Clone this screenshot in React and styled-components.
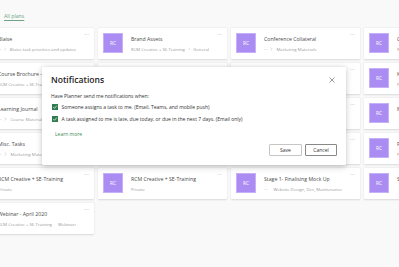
import styled, { createGlobalStyle } from 'styled-components';

const GlobalStyle = createGlobalStyle`
  html, body {
    margin: 0;
    padding: 0;
    background: #f9f9f9;
    font-family: "Open Sans", "Noto Sans", sans-serif;
    overflow: hidden;
  }
`;

const Page = styled.div`
  position: relative;
  width: 399px;
  height: 267px;
  overflow: hidden;
  background: #f9f9f9;
`;

const Header = styled.div`
  height: 27px;
  padding-left: 4px;
  display: flex;
  align-items: flex-start;
  padding-top: 12px;
  box-sizing: border-box;
`;

const AllPlans = styled.a`
  font-size: 5.2px;
  color: #6fa381;
  text-decoration: underline;
  text-underline-offset: 1.5px;
`;

const Grid = styled.div`
  display: grid;
  grid-template-columns: repeat(4, 129px);
  grid-auto-rows: 31px;
  column-gap: 4px;
  row-gap: 4px;
  margin-left: -35px;
  margin-top: 1px;
`;

const Card = styled.div`
  background: #fff;
  box-shadow: 0 0.5px 2px rgba(0, 0, 0, 0.13);
  border-radius: 1px;
  display: flex;
  align-items: flex-start;
  padding: 5px 5px 0 5px;
  gap: 8px;
  box-sizing: border-box;
`;

const Avatar = styled.div`
  width: 20px;
  height: 20px;
  flex: none;
  background: #ab8cf3;
  border: 0.5px solid #c6b1f8;
  box-sizing: border-box;
  color: #fff;
  font-size: 4.8px;
  display: flex;
  align-items: center;
  justify-content: center;
`;

const Info = styled.div`
  flex: 1;
  min-width: 0;
  display: flex;
  flex-direction: column;
  gap: 2.5px;
  padding-top: 2px;
`;

const Title = styled.div`
  font-size: 5.2px;
  color: #4a4a4a;
  white-space: nowrap;
  overflow: hidden;
`;

const Sub = styled.div`
  font-size: 4.3px;
  color: #9a9a9a;
  white-space: nowrap;
  overflow: hidden;
  display: flex;
  align-items: center;
  gap: 3px;
`;

const More = styled.div`
  font-size: 5px;
  letter-spacing: 0.3px;
  color: #8a8a8a;
  line-height: 3px;
  flex: none;
`;

const Dialog = styled.div`
  position: absolute;
  left: 42px;
  top: 67px;
  width: 304px;
  background: #fff;
  border-radius: 1px;
  box-shadow: 0 1.5px 6px rgba(0, 0, 0, 0.22), 0 0 1px rgba(0, 0, 0, 0.12);
  padding: 7px 9px 9px 9px;
  box-sizing: border-box;
  display: flex;
  flex-direction: column;
`;

const DialogHead = styled.div`
  display: flex;
  justify-content: space-between;
  align-items: center;
`;

const DialogTitle = styled.div`
  font-size: 8.6px;
  font-weight: 600;
  color: #252423;
`;

const Close = styled.svg`
  width: 6px;
  height: 6px;
  margin-right: 2px;
`;

const Lead = styled.div`
  font-size: 5px;
  color: #333;
  margin-top: 7px;
`;

const Option = styled.label`
  display: flex;
  align-items: center;
  gap: 3.5px;
  font-size: 5px;
  color: #333;
  margin-top: ${(p) => p.$gap}px;
  padding-left: 1px;
`;

const Box = styled.svg`
  width: 6px;
  height: 6px;
  flex: none;
`;

const LearnMore = styled.a`
  font-size: 5px;
  color: #3f8a5c;
  margin-top: 9px;
  padding-left: 4px;
`;

const Actions = styled.div`
  display: flex;
  justify-content: flex-end;
  gap: 3px;
  margin-top: 7px;
`;

const Button = styled.button`
  height: 12px;
  width: ${(p) => p.$w}px;
  padding: 0;
  font-family: inherit;
  font-size: 5px;
  color: #333;
  background: #fff;
  border: 0.7px solid ${(p) => (p.$strong ? '#8a8886' : '#c8c6c4')};
  border-radius: 1px;
`;

const Chevron = () => (
  <svg width="3" height="4" viewBox="0 0 3 4">
    <path d="M0.8 0.5 L2.2 2 L0.8 3.5" fill="none" stroke="#aaa" strokeWidth="0.45" />
  </svg>
);

// null = card sits fully under the dialog, nothing of it shows
const plans = [
  ['Blaise', '··· | Blaise task priorities and updates'],
  ['Brand Assets', 'RCM Creative + SE-Training | General'],
  ['Conference Collateral', '··· | Marketing Materials'],
  ['Content Calendar', 'RCM Creative + SE-Training'],
  ['Course Brochure - Design', 'RCM Creative + SE-Training | General'],
  null,
  ['Instagram Content', 'RCM Creative + SE-Training | Social Media'],
  ['Key Dates', 'Private'],
  ['Learning Journal', '··· | Course Materials'],
  null,
  ['LinkedIn Posts', 'RCM Creative + SE-Training | Social Media'],
  ['Marketing Plan', ''],
  ['Misc. Tasks', '··· | Marketing Materials'],
  null,
  ['Photo Shoot', 'RCM Creative + SE-Training | Social Media'],
  ['Podcast', 'Private'],
  ['RCM Creative + SE-Training', 'Private'],
  ['RCM Creative + SE-Training', 'Private'],
  ['Stage 1- Finalising Mock Up', '··· | Website Design, Dev, Maintenance'],
  ['Social Campaign', ''],
  ['Webinar - April 2020', 'RCM Creative + SE-Training | Webinars'],
];

const Subtitle = ({ text }) => {
  const parts = text.split(' | ');
  return (
    <Sub>
      {parts.map((p, i) => (
        <span key={i} style={{ display: 'contents' }}>
          {i > 0 && <Chevron />}
          <span>{p}</span>
        </span>
      ))}
    </Sub>
  );
};

const CheckBox = () => (
  <Box viewBox="0 0 6 6">
    <rect x="0" y="0" width="6" height="6" fill="#2f7d4f" />
    <path d="M1.3 3.1 L2.5 4.3 L4.8 1.7" fill="none" stroke="#fff" strokeWidth="0.7" />
  </Box>
);

export default function App() {
  return (
    <Page>
      <GlobalStyle />
      <Header>
        <AllPlans>All plans</AllPlans>
      </Header>
      <Grid>
        {plans.map((plan, i) =>
          plan ? (
            <Card key={i}>
              <Avatar>RC</Avatar>
              <Info>
                <Title>{plan[0]}</Title>
                {plan[1] && <Subtitle text={plan[1]} />}
              </Info>
              <More>···</More>
            </Card>
          ) : (
            <Card key={i} />
          )
        )}
      </Grid>
      <Dialog>
        <DialogHead>
          <DialogTitle>Notifications</DialogTitle>
          <Close viewBox="0 0 6 6">
            <path d="M0.5 0.5 L5.5 5.5 M5.5 0.5 L0.5 5.5" stroke="#555" strokeWidth="0.6" />
          </Close>
        </DialogHead>
        <Lead>Have Planner send me notifications when:</Lead>
        <Option $gap={5}>
          <CheckBox />
          Someone assigns a task to me. (Email, Teams, and mobile push)
        </Option>
        <Option $gap={6}>
          <CheckBox />
          A task assigned to me is late, due today, or due in the next 7 days. (Email only)
        </Option>
        <LearnMore>Learn more</LearnMore>
        <Actions>
          <Button $w={33}>Save</Button>
          <Button $w={32} $strong>Cancel</Button>
        </Actions>
      </Dialog>
    </Page>
  );
}
